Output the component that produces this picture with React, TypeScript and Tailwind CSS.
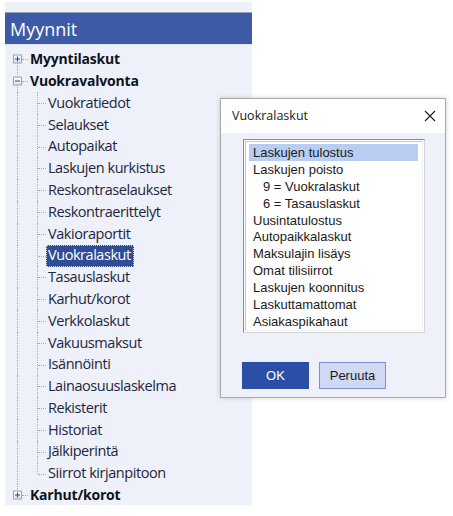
import React from "react";

const children = [
  "Vuokratiedot",
  "Selaukset",
  "Autopaikat",
  "Laskujen kurkistus",
  "Reskontraselaukset",
  "Reskontraerittelyt",
  "Vakioraportit",
  "Vuokralaskut",
  "Tasauslaskut",
  "Karhut/korot",
  "Verkkolaskut",
  "Vakuusmaksut",
  "Isännöinti",
  "Lainaosuuslaskelma",
  "Rekisterit",
  "Historiat",
  "Jälkiperintä",
  "Siirrot kirjanpitoon",
];

const listItems: { t: string; indent?: boolean }[] = [
  { t: "Laskujen tulostus" },
  { t: "Laskujen poisto" },
  { t: "9 = Vuokralaskut", indent: true },
  { t: "6 = Tasauslaskut", indent: true },
  { t: "Uusintatulostus" },
  { t: "Autopaikkalaskut" },
  { t: "Maksulajin lisäys" },
  { t: "Omat tilisiirrot" },
  { t: "Laskujen koonnitus" },
  { t: "Laskuttamattomat" },
  { t: "Asiakaspikahaut" },
];

function ExpBox({ open }: { open: boolean }) {
  return (
    <span className="absolute left-[8px] top-1/2 -translate-y-1/2 w-[9px] h-[9px] border border-[#9aa3b5] bg-[linear-gradient(#ffffff,#dde2ec)] flex items-center justify-center">
      <span className="absolute w-[5px] h-px bg-[#3a4a6a]" />
      {!open && <span className="absolute w-px h-[5px] bg-[#3a4a6a]" />}
    </span>
  );
}

function TopRow({
  label,
  open,
  lineUp,
  lineDown,
}: {
  label: string;
  open: boolean;
  lineUp: boolean;
  lineDown: boolean;
}) {
  return (
    <div className="relative h-[21.8px] flex items-center pl-[25px]">
      {lineUp && (
        <span className="absolute left-[12px] top-0 h-1/2 border-l border-dotted border-[#a7adb8]" />
      )}
      {lineDown && (
        <span className="absolute left-[12px] top-1/2 bottom-0 border-l border-dotted border-[#a7adb8]" />
      )}
      <span className="absolute left-[17px] top-1/2 w-[6px] border-t border-dotted border-[#a7adb8]" />
      <ExpBox open={open} />
      <span className="font-bold text-[14px] text-[#0d1420] leading-none tracking-[-0.2px]">{label}</span>
    </div>
  );
}

function ChildRow({ label, last, selected }: { label: string; last: boolean; selected: boolean }) {
  return (
    <div className="relative h-[21.8px] flex items-center pl-[41px]">
      <span className="absolute left-[12px] top-0 bottom-0 border-l border-dotted border-[#a7adb8]" />
      <span
        className={
          last
            ? "absolute left-[32px] top-0 h-1/2 border-l border-dotted border-[#a7adb8]"
            : "absolute left-[32px] top-0 bottom-0 border-l border-dotted border-[#a7adb8]"
        }
      />
      <span className="absolute left-[33px] top-1/2 w-[8px] border-t border-dotted border-[#a7adb8]" />
      {selected ? (
        <span className="h-[22px] flex items-center pl-[2px] pr-[3px] bg-[#2f4c95] text-white outline outline-1 outline-dotted outline-[#c9cfdc] -outline-offset-1 text-[14.5px] tracking-[-0.45px] leading-none">
          {label}
        </span>
      ) : (
        <span className="pl-[2px] text-[14.5px] tracking-[-0.45px] text-[#1c2640] leading-none">{label}</span>
      )}
    </div>
  );
}

export default function App() {
  return (
    <div
      className="relative w-[453px] h-[516px] bg-white overflow-hidden"
      style={{ fontFamily: "'Open Sans', 'Noto Sans', sans-serif" }}
    >
      <div className="pt-[2px] pl-[5px]">
        <div className="w-[247px] h-[503px] bg-[#eef1f9]">
          <div className="h-[10px]" />
          <div className="h-[33px] bg-[#3c5aa5] border-t border-[#9aa4bd] border-b border-b-[#dfe3ee] flex items-center pl-[5px]">
            <span className="text-white text-[18px] leading-none">Myynnit</span>
          </div>
          <div className="pt-[3.5px]">
            <TopRow label="Myyntilaskut" open={false} lineUp={false} lineDown={true} />
            <TopRow label="Vuokravalvonta" open={true} lineUp={true} lineDown={true} />
            <div className="relative">
              {children.map((c, i) => (
                <ChildRow
                  key={i}
                  label={c}
                  last={i === children.length - 1}
                  selected={c === "Vuokralaskut"}
                />
              ))}
            </div>
            <TopRow label="Karhut/korot" open={false} lineUp={true} lineDown={false} />
          </div>
        </div>
      </div>

      {/* Dialog window */}
      <div
        className="absolute left-[220px] top-[98px] w-[226px] h-[300px] border border-[#a9a9a9] bg-[#eef1f9] shadow-[0_0_5px_rgba(0,0,0,0.18)] flex flex-col"
        style={{ fontFamily: "'Liberation Sans', Arial, sans-serif" }}
      >
        <div className="h-[34px] bg-white flex items-center justify-between pl-[11px] pr-[9px]">
          <span className="text-[12.5px] text-[#1a1a1a]" style={{ fontFamily: "'Open Sans', sans-serif" }}>
            Vuokralaskut
          </span>
          <svg width="12" height="12" viewBox="0 0 12 12" className="text-[#1a1a1a]">
            <path d="M1 1 L11 11 M11 1 L1 11" stroke="currentColor" strokeWidth="1.1" />
          </svg>
        </div>
        <div className="flex-1 pl-[22px] pt-[6px]">
          <div className="w-[182px] h-[194px] bg-white border border-[#8e8e8e] border-r-[#d6d6d6] border-b-[#d6d6d6] p-[1px]">
            <div className="w-full h-full border border-[#c8c8c8] border-r-[#f0f0f0] border-b-[#f0f0f0] pt-[2px] pl-[3px] pr-[4px]">
              {listItems.map((it, i) => (
                <div
                  key={i}
                  className={
                    (i === 0 ? "bg-[#b9cdf2] " : "") +
                    "h-[16.9px] flex items-center text-[13px] text-[#1a1a1a] leading-none " +
                    (it.indent ? "pl-[14px]" : "pl-[4px]")
                  }
                >
                  {it.t}
                </div>
              ))}
            </div>
          </div>
          <div className="flex gap-[10px] mt-[29px] -ml-px">
            <div className="w-[67px] h-[27px] bg-[#2b4fa6] flex items-center justify-center text-white text-[13px]">
              OK
            </div>
            <div className="w-[67px] h-[27px] bg-[#cfd9f1] border border-[#7592d3] flex items-center justify-center text-[#1a1a1a] text-[13px]">
              Peruuta
            </div>
          </div>
        </div>
      </div>
    </div>
  );
}
